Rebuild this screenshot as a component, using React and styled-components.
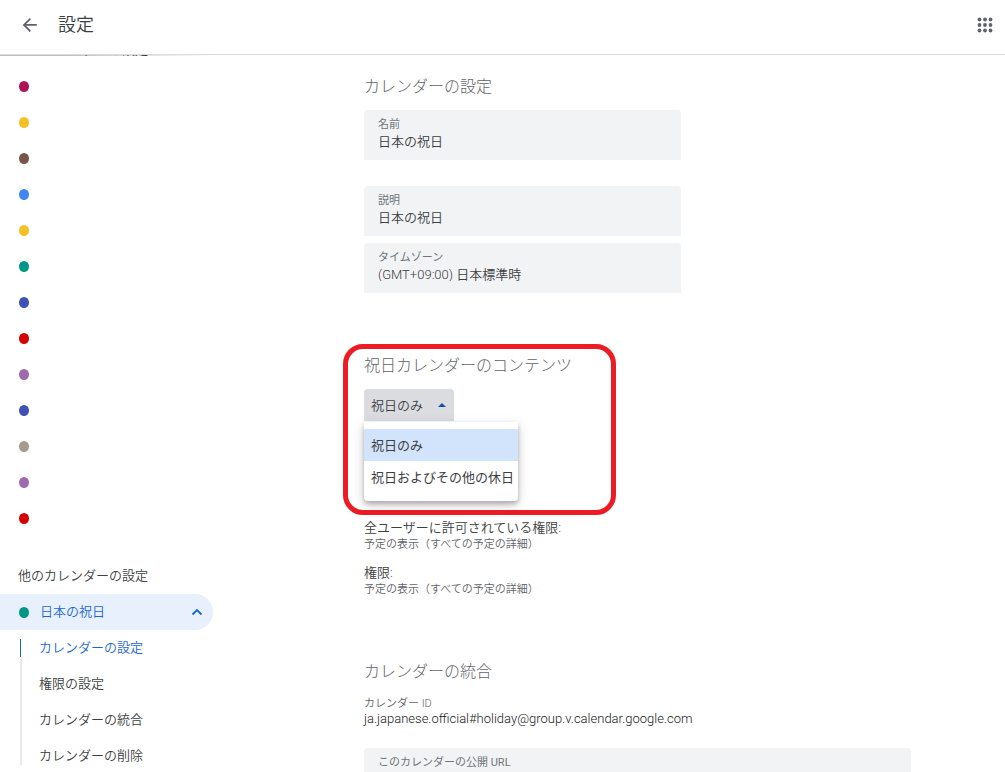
import React, { useState } from 'react'
import styled, { createGlobalStyle } from 'styled-components'

const MY_CALENDAR_COLORS = [
  '#ad1457', '#f6bf26', '#795548', '#4285f4', '#f6bf26', '#009688', '#3f51b5',
  '#d50000', '#9e69af', '#3f51b5', '#a79b8e', '#9e69af', '#d50000',
]

const SUB_MENU = [
  'カレンダーの設定',
  '権限の設定',
  'カレンダーの統合',
  'カレンダーの削除',
]

const CONTENT_OPTIONS = ['祝日のみ', '祝日およびその他の休日']

const Field = ({ id, label, value }) => (
  <FieldBox>
    <FieldLabel htmlFor={id}>{label}</FieldLabel>
    <FieldInput id={id} value={value} readOnly />
  </FieldBox>
)

const HolidayContentSelect = () => {
  const [open, setOpen] = useState(true)
  const [content, setContent] = useState(CONTENT_OPTIONS[0])

  return (
    <SelectWrap>
      <SelectButton
        type={'button'}
        aria-haspopup={'listbox'}
        aria-expanded={open}
        onClick={() => setOpen(!open)}
      >
        <span>{content}</span>
        <svg width="8" height="4" viewBox="0 0 8 4" aria-hidden="true">
          <path d="M0 4 4 0l4 4z" fill="#174ea6" />
        </svg>
      </SelectButton>
      {
        open && (
          <SelectMenu>
            <SelectList
              size={2}
              aria-label={'祝日カレンダーのコンテンツ'}
              value={content}
              onChange={(e) => setContent(e.target.value)}
            >
              {CONTENT_OPTIONS.map(o => <option key={o} value={o}>{o}</option>)}
            </SelectList>
          </SelectMenu>
        )
      }
    </SelectWrap>
  )
}

const App = () => {
  return (
    <>
      <GlobalStyle />
      <Page>
        <Header>
          <IconButton type={'button'} aria-label={'戻る'}>
            <svg width="24" height="24" viewBox="0 0 24 24" aria-hidden="true">
              <path
                d="M20 11H7.83l5.59-5.59L12 4l-8 8 8 8 1.41-1.41L7.83 13H20v-2z"
                fill="#5f6368"
                transform="translate(1.2 1.4) scale(.88)"
              />
            </svg>
          </IconButton>
          <PageTitle>設定</PageTitle>
          <IconButton type={'button'} aria-label={'アプリ'}>
            <svg width="24" height="24" viewBox="0 0 24 24" aria-hidden="true">
              {[6.5, 12, 17.5].map(y => [6.5, 12, 17.5].map(x => (
                <circle key={`${x}-${y}`} cx={x} cy={y} r="1.9" fill="#5f6368" />
              )))}
            </svg>
          </IconButton>
        </Header>

        <Body>
          <Sidebar>
            <MyCalendarTitle>マイカレンダーの設定</MyCalendarTitle>
            {MY_CALENDAR_COLORS.map((color, i) => (
              <CalendarRow key={i}><Dot $color={color} /></CalendarRow>
            ))}
            <OtherCalendarTitle>他のカレンダーの設定</OtherCalendarTitle>
            <ActiveCalendar type={'button'} aria-expanded={true}>
              <Dot $color={'#009688'} />
              <span>日本の祝日</span>
              <svg width="12" height="8" viewBox="0 0 12 8" aria-hidden="true">
                <path d="M1.5 6.5 6 2l4.5 4.5" fill="none" stroke="#1967d2" strokeWidth="1.8" />
              </svg>
            </ActiveCalendar>
            <SubMenu>
              {SUB_MENU.map((name, i) => (
                <SubMenuItem key={name} $active={i === 0}>
                  <a href={'#'}>{name}</a>
                </SubMenuItem>
              ))}
            </SubMenu>
          </Sidebar>

          <Main>
            <SectionTitle>カレンダーの設定</SectionTitle>
            <FieldGroup>
              <Field id={'name'} label={'名前'} value={'日本の祝日'} />
            </FieldGroup>
            <FieldGroup>
              <Field id={'description'} label={'説明'} value={'日本の祝日'} />
              <Field id={'timezone'} label={'タイムゾーン'} value={'(GMT+09:00) 日本標準時'} />
            </FieldGroup>

            <HolidaySection>
              <SectionTitle>祝日カレンダーのコンテンツ</SectionTitle>
              <HolidayContentSelect />
              <Highlight />
            </HolidaySection>

            <Permissions>
              <dt>全ユーザーに許可されている権限:</dt>
              <dd>予定の表示（すべての予定の詳細）</dd>
              <dt>権限:</dt>
              <dd>予定の表示（すべての予定の詳細）</dd>
            </Permissions>

            <SectionTitle>カレンダーの統合</SectionTitle>
            <CalendarId>
              <dt>カレンダー ID</dt>
              <dd>ja.japanese.official#holiday@group.v.calendar.google.com</dd>
            </CalendarId>
            <Field
              id={'public-url'}
              label={'このカレンダーの公開 URL'}
              value={''}
            />
          </Main>
        </Body>
      </Page>
    </>
  )
}

export default App

const GlobalStyle = createGlobalStyle`
  * {
    box-sizing: border-box;
  }

  body {
    margin: 0;
    background: #fff;
    color: #3c4043;
  }

  body, button, input, select {
    font-family: Roboto, 'Noto Sans CJK JP', sans-serif;
    font-size: 13px;
    font-weight: 350;
  }
`

const Page = styled.div`
  display: flex;
  flex-direction: column;
  height: 100vh;
  overflow: hidden;
`

const Header = styled.header`
  display: flex;
  align-items: center;
  flex: none;
  height: 55px;
  padding: 0 8px 5px 18px;
  border-bottom: 1px solid #dadce0;
`

const IconButton = styled.button`
  display: flex;
  padding: 0;
  border: 0;
  background: none;
`

const PageTitle = styled.h1`
  flex: 1;
  margin: 0 0 0 16px;
  font-size: 18px;
  font-weight: 350;
  line-height: 24px;
`

const Body = styled.div`
  display: flex;
  flex: 1;
  min-height: 0;
`

const Sidebar = styled.nav`
  flex: none;
  width: 213px;
  overflow: hidden;
  background: linear-gradient(to right, #bdbdbd, #bdbdbd 30%, #fff) no-repeat top / 100% 1px;
`

/* scrolled up, only the foot of the heading is left under the header */
const MyCalendarTitle = styled.h2`
  margin: -15px 0 8px 18px;
  font-size: 13px;
  font-weight: 350;
  line-height: 20px;
`

const CalendarRow = styled.div`
  display: flex;
  align-items: center;
  height: 36px;
  padding-left: 19px;
`

const Dot = styled.span`
  width: 10px;
  height: 11px;
  border-radius: 50%;
  background: ${({ $color }) => $color};
`

const OtherCalendarTitle = styled.h2`
  margin: 30px 0 8px 18px;
  font-size: 13px;
  font-weight: 350;
  line-height: 20px;
`

const ActiveCalendar = styled.button`
  display: flex;
  align-items: center;
  gap: 11px;
  width: 100%;
  height: 36px;
  padding: 0 10px 0 19px;
  border: 0;
  border-radius: 0 18px 18px 0;
  background: #e8f0fe;
  color: #1967d2;

  span:nth-child(2) {
    flex: 1;
    padding-bottom: 3px;
    text-align: left;
  }
`

const SubMenu = styled.ul`
  display: flex;
  flex-direction: column;
  gap: 18px;
  margin: 9px 0 0 20px;
  padding: 0;
  border-left: 2px solid #e8eaed;
  list-style: none;
`

const SubMenuItem = styled.li`
  margin-left: -2px;
  padding-left: 18px;
  border-left: 1px solid ${({ $active }) => $active ? '#1967d2' : 'transparent'};
  background: ${({ $active }) => $active ? '#fff' : 'none'};
  line-height: 18px;

  a {
    color: ${({ $active }) => $active ? '#1967d2' : '#3c4043'};
    text-decoration: none;
  }
`

const Main = styled.main`
  flex: 1;
  min-width: 0;
  overflow: hidden;
  padding: 20px 94px 0 151px;
`

const SectionTitle = styled.h2`
  margin: 0 0 11px;
  color: #5f6368;
  font-size: 16px;
  font-weight: 300;
  line-height: 24px;
`

const FieldGroup = styled.div`
  display: flex;
  flex-direction: column;
  gap: 7px;
  max-width: 317px;
  margin-bottom: 26px;
`

const FieldBox = styled.div`
  display: flex;
  flex-direction: column;
  height: 50px;
  padding: 7px 14px;
  border-radius: 4px 4px 0 0;
  background: #f1f3f4;
`

const FieldLabel = styled.label`
  color: #70757a;
  font-size: 11px;
  font-weight: 400;
  line-height: 14px;
  padding-top: 1px;
`

const FieldInput = styled.input`
  width: 100%;
  height: 16px;
  padding: 0;
  border: 0;
  outline: 0;
  background: none;
  color: #3c4043;
`

const HolidaySection = styled.section`
  position: relative;
  width: fit-content;
  margin-top: 61px;
`

const Highlight = styled.div`
  position: absolute;
  inset: -10px -44px -94px -21px;
  border: 5px solid #ed1c24;
  border-radius: 20px;
  pointer-events: none;
`

const SelectWrap = styled.div`
  position: relative;
`

const SelectButton = styled.button`
  display: flex;
  align-items: center;
  justify-content: space-between;
  width: 90px;
  height: 32px;
  padding: 0 8px 0 7px;
  border: 0;
  border-radius: 4px 4px 0 0;
  background: #dadce0;
  color: #3c4043;

  span {
    padding-bottom: 2px;
  }
`

const SelectMenu = styled.div`
  position: absolute;
  z-index: 1;
  top: 33px;
  left: 0;
  width: 154px;
  padding: 7px 0 8px;
  border-radius: 0 0 4px 4px;
  background: #fff;
  box-shadow: 0 3px 5px rgba(0, 0, 0, .26), 0 4px 14px rgba(0, 0, 0, .14);
`

const SelectList = styled.select`
  display: block;
  width: 100%;
  height: 64px;
  padding: 0;
  border: 0;
  outline: 0;
  overflow: hidden;
  background: #fff;

  option {
    height: 32px;
    padding: 6px 0 0 7px;
    color: #3c4043;
  }

  option:checked {
    background: #d2e3fc linear-gradient(#d2e3fc, #d2e3fc);
    color: #3c4043;
  }
`

const Permissions = styled.dl`
  margin: 98px 0 62px;

  dt {
    line-height: 18px;
  }

  dd {
    margin: 0;
    color: #5f6368;
    font-size: 11px;
    line-height: 16px;
  }

  dd + dt {
    margin-top: 11px;
  }
`

const CalendarId = styled.dl`
  margin: 0 0 22px;
  padding-top: 1px;

  dt {
    color: #5f6368;
    font-size: 11px;
    line-height: 16px;
  }

  dd {
    margin: 0;
    color: #202124;
    line-height: 14px;
  }
`
